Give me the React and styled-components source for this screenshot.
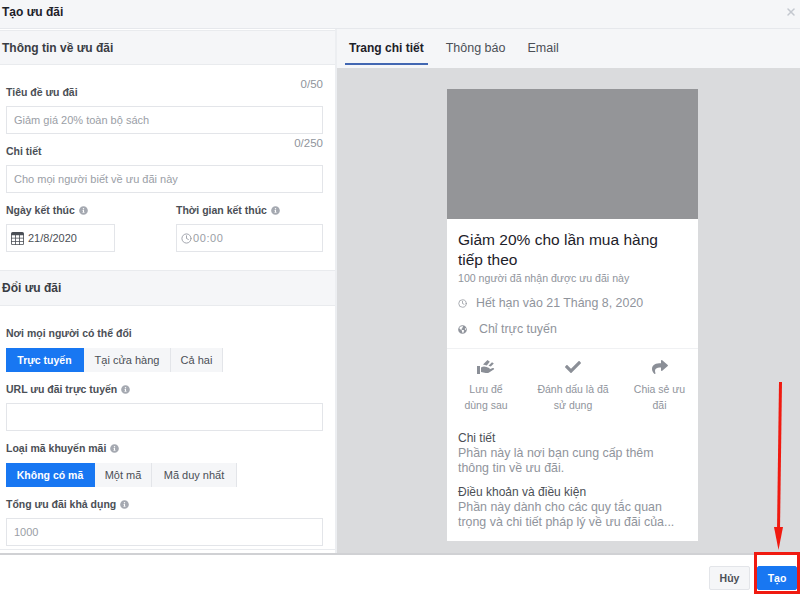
import React from 'react';
import styled, { createGlobalStyle } from 'styled-components';
import { FaCheck, FaShare, FaGlobeAmericas, FaInfoCircle } from 'react-icons/fa';
import { FiClock, FiX } from 'react-icons/fi';
import { BsTable } from 'react-icons/bs';

const GlobalStyle = createGlobalStyle`
  html, body {
    margin: 0;
    padding: 0;
    background: #fff;
    font-family: "Liberation Sans", Arial, sans-serif;
  }
  * { box-sizing: border-box; }
`;

const Page = styled.div`
  position: relative;
  width: 800px;
  height: 600px;
  overflow: hidden;
  display: flex;
  flex-direction: column;
  background: #fff;
`;

const TitleBar = styled.header`
  height: 29px;
  flex: none;
  display: flex;
  align-items: center;
  justify-content: space-between;
  padding: 0 3px 5px 2px;
  background: #f5f6f8;
  border-bottom: 1px solid #e6e8ec;
`;

const Title = styled.h1`
  margin: 0;
  font-size: 12px;
  font-weight: 700;
  color: #1d2129;
`;

const CloseIcon = styled(FiX)`
  width: 12px;
  height: 12px;
  stroke-width: 3;
  color: #c4c8cf;
`;

const Body = styled.div`
  height: 526px;
  flex: none;
  display: flex;
  border-bottom: 2px solid #d0d1d4;
`;

const LeftPanel = styled.div`
  width: 337px;
  flex: none;
  border-right: 2px solid #eceef1;
  padding-top: 1px;
  background: #fff;
`;

const SectionHeader = styled.h2`
  margin: 0;
  height: ${(p) => p.$height}px;
  display: flex;
  align-items: center;
  padding-left: 2px;
  font-size: 12px;
  font-weight: 700;
  color: #3a3d44;
  background: #f5f6f8;
  border-top: 1px solid #e9ebee;
  border-bottom: 1px solid #e9ebee;
`;

const Section = styled.section`
  height: ${(p) => p.$height}px;
  padding: 20px 12px 0 6px;
  border-bottom: ${(p) => (p.$line ? '1px solid #e9ebee' : 'none')};
`;

const FieldHead = styled.div`
  height: 14px;
  display: flex;
  align-items: center;
  justify-content: space-between;
  margin-bottom: 7px;
`;

const Label = styled.label`
  display: flex;
  align-items: center;
  gap: 4px;
  font-size: 10.5px;
  font-weight: 700;
  color: #4b4f56;
  white-space: nowrap;
`;

const InfoIcon = styled(FaInfoCircle)`
  width: 9px;
  height: 9px;
  color: #a5a9b1;
`;

const Counter = styled.span`
  margin-top: -17px;
  font-size: 11.5px;
  color: #90949c;
`;

const TextInput = styled.div`
  height: 28px;
  display: flex;
  align-items: center;
  gap: ${(p) => (p.$gap ? p.$gap : 0)}px;
  padding-left: ${(p) => (p.$pad ? p.$pad : 7)}px;
  border: 1px solid #e3e5e9;
  font-size: 11px;
  color: ${(p) => (p.$filled ? '#4b4f56' : '#9a9ea6')};
  margin-bottom: ${(p) => (p.$last ? 0 : 10)}px;
  background: #fff;
`;

const TimeValue = styled.span`
  letter-spacing: 0.6px;
`;

const DateRow = styled.div`
  display: flex;
  justify-content: space-between;
`;

const DateField = styled.div`
  width: ${(p) => p.$width}px;
`;

const SegmentGroup = styled.div`
  display: flex;
  margin: 8px 0 10px;
  height: 24px;
`;

const SegmentHead = styled(FieldHead)`
  margin-bottom: 0;
`;

const Segment = styled.div`
  height: 24px;
  width: ${(p) => p.$width}px;
  display: flex;
  align-items: center;
  justify-content: center;
  font-size: ${(p) => (p.$active ? 10.5 : 11)}px;
  font-weight: ${(p) => (p.$active ? 700 : 400)};
  color: ${(p) => (p.$active ? '#fff' : '#4b4f56')};
  background: ${(p) => (p.$active ? '#1877f2' : '#f5f6f8')};
  border-right: 1px solid ${(p) => (p.$active ? '#1877f2' : '#e3e5e9')};
`;

const Preview = styled.div`
  flex: 1;
  display: flex;
  flex-direction: column;
  background: #dadbdd;
`;

const Tabs = styled.nav`
  height: 39px;
  flex: none;
  display: flex;
  gap: 14px;
  padding-left: 8px;
  background: #f5f6f8;
`;

const Tab = styled.div`
  height: 36px;
  display: flex;
  align-items: center;
  padding: 4px 4px 0;
  font-size: ${(p) => (p.$active ? 12 : 12.5)}px;
  font-weight: ${(p) => (p.$active ? 700 : 400)};
  color: ${(p) => (p.$active ? '#1d2129' : '#4b4f56')};
  border-bottom: 2px solid ${(p) => (p.$active ? '#4267b2' : 'transparent')};
`;

const Card = styled.article`
  width: 251px;
  height: 452px;
  margin: 21px 0 0 110px;
  background: #fff;
`;

const CardImage = styled.div`
  height: 130px;
  background: #949598;
`;

const CardBody = styled.div`
  padding: 11px 11px 0;
`;

const CardTitle = styled.h3`
  margin: 0 0 2px;
  font-size: 15.5px;
  font-weight: 400;
  line-height: 20px;
  color: #1d2129;
`;

const Claimed = styled.div`
  font-size: 10.6px;
  line-height: 12px;
  color: #90949c;
  margin-bottom: 12px;
`;

const MetaRow = styled.div`
  display: flex;
  align-items: center;
  gap: ${(p) => p.$gap}px;
  height: 14px;
  margin-bottom: 12px;
  font-size: 12.4px;
  color: #90949c;
  white-space: nowrap;
  svg {
    width: 9px;
    height: 9px;
    color: #90949c;
  }
`;

const Actions = styled.div`
  display: grid;
  grid-template-columns: 78px 96px 77px;
  margin-top: 1px;
  padding-top: 8px;
  border-top: 1px solid #f0f1f3;
  height: 81px;
`;

const Action = styled.div`
  display: flex;
  flex-direction: column;
  align-items: center;
  gap: 6px;
  padding-top: 2px;
  text-align: center;
  font-size: 10.5px;
  line-height: 16px;
  color: #90949c;
  white-space: nowrap;
  svg {
    width: 18px;
    height: 16px;
    color: #8b8f97;
  }
`;

const ActionText = styled.span`
  display: block;
`;

const Copy = styled.div`
  padding: 2px 11px 0;
`;

const CopyBlock = styled.div`
  margin-bottom: 9px;
`;

const CopyTitle = styled.div`
  font-size: 12px;
  line-height: 15px;
  color: #4b4f56;
`;

const CopyText = styled.div`
  font-size: 12.4px;
  line-height: 15px;
  color: #90949c;
  white-space: nowrap;
`;

const Footer = styled.footer`
  flex: 1;
  display: flex;
  align-items: center;
  justify-content: flex-end;
  gap: 7px;
  padding: 0 3px 0 0;
  background: #fff;
`;

const Button = styled.button`
  width: ${(p) => p.$width}px;
  height: 24px;
  padding: 0;
  font-family: inherit;
  font-size: 10.5px;
  font-weight: 700;
  border-radius: 2px;
  color: ${(p) => (p.$primary ? '#fff' : '#4b4f56')};
  background: ${(p) => (p.$primary ? '#1877f2' : '#f5f6f8')};
  border: 1px solid ${(p) => (p.$primary ? '#1877f2' : '#e3e5e9')};
`;

const Highlight = styled.div`
  position: absolute;
  left: 754px;
  top: 552px;
  width: 46px;
  height: 42px;
  border: 3px solid #f01a10;
`;

const ArrowDrawing = styled.svg`
  position: absolute;
  left: 770px;
  top: 380px;
`;

// hand with the offer lying on it, the library has no close match
const SaveIcon = () => (
  <svg viewBox="0 0 18 16" fill="currentColor">
    <rect x="0" y="7" width="3" height="8" />
    <path d="M4 8.5c2-1.3 3.6-1.3 5.5-.4l2.7 1c1 .5.5 1.8-.5 1.6l-3-.6 3.4.3 3.6-1.4c1.2-.4 2 .9 1 1.6l-5 3.1c-1 .5-2 .5-3 .2L4 13z" />
    <path d="M6 5.600 10.500 1l2.300 1.700L9.800 6.400z" />
    <path d="M11.500 6.800 15 3.200l1.800 1.400-3 3z" />
  </svg>
);

const App = () => (
  <Page>
    <GlobalStyle />
    <TitleBar>
      <Title>Tạo ưu đãi</Title>
      <CloseIcon />
    </TitleBar>
    <Body>
      <LeftPanel>
        <SectionHeader $height={35}>Thông tin về ưu đãi</SectionHeader>
        <Section $height={205}>
          <FieldHead>
            <Label>Tiêu đề ưu đãi</Label>
            <Counter>0/50</Counter>
          </FieldHead>
          <TextInput>Giảm giá 20% toàn bộ sách</TextInput>
          <FieldHead>
            <Label>Chi tiết</Label>
            <Counter>0/250</Counter>
          </FieldHead>
          <TextInput>Cho mọi người biết về ưu đãi này</TextInput>
          <DateRow>
            <DateField $width={109}>
              <FieldHead>
                <Label>Ngày kết thúc <InfoIcon /></Label>
              </FieldHead>
              <TextInput $filled $pad={4} $gap={4} $last>
                <BsTable size={13} color="#4b4f56" />
                21/8/2020
              </TextInput>
            </DateField>
            <DateField $width={147}>
              <FieldHead>
                <Label>Thời gian kết thúc <InfoIcon /></Label>
              </FieldHead>
              <TextInput $pad={4} $gap={1} $last>
                <FiClock size={11} color="#9a9ea6" />
                <TimeValue>00:00</TimeValue>
              </TextInput>
            </DateField>
          </DateRow>
        </Section>
        <SectionHeader $height={36}>Đổi ưu đãi</SectionHeader>
        <Section $height={244} $line>
          <SegmentHead>
            <Label>Nơi mọi người có thể đổi</Label>
          </SegmentHead>
          <SegmentGroup>
            <Segment $active $width={78}>Trực tuyến</Segment>
            <Segment $width={87}>Tại cửa hàng</Segment>
            <Segment $width={52}>Cả hai</Segment>
          </SegmentGroup>
          <FieldHead>
            <Label>URL ưu đãi trực tuyến <InfoIcon /></Label>
          </FieldHead>
          <TextInput />
          <SegmentHead>
            <Label>Loại mã khuyến mãi <InfoIcon /></Label>
          </SegmentHead>
          <SegmentGroup>
            <Segment $active $width={89}>Không có mã</Segment>
            <Segment $width={57}>Một mã</Segment>
            <Segment $width={85}>Mã duy nhất</Segment>
          </SegmentGroup>
          <FieldHead>
            <Label>Tổng ưu đãi khả dụng <InfoIcon /></Label>
          </FieldHead>
          <TextInput $last>1000</TextInput>
        </Section>
      </LeftPanel>
      <Preview>
        <Tabs>
          <Tab $active>Trang chi tiết</Tab>
          <Tab>Thông báo</Tab>
          <Tab>Email</Tab>
        </Tabs>
        <Card>
          <CardImage />
          <CardBody>
            <CardTitle>Giảm 20% cho lần mua hàng tiếp theo</CardTitle>
            <Claimed>100 người đã nhận được ưu đãi này</Claimed>
            <MetaRow $gap={9}><FiClock />Hết hạn vào 21 Tháng 8, 2020</MetaRow>
            <MetaRow $gap={12}><FaGlobeAmericas />Chỉ trực tuyến</MetaRow>
          </CardBody>
          <Actions>
            <Action><SaveIcon /><ActionText>Lưu để<br />dùng sau</ActionText></Action>
            <Action><FaCheck /><ActionText>Đánh dấu là đã<br />sử dụng</ActionText></Action>
            <Action><FaShare /><ActionText>Chia sẻ ưu<br />đãi</ActionText></Action>
          </Actions>
          <Copy>
            <CopyBlock>
              <CopyTitle>Chi tiết</CopyTitle>
              <CopyText>Phần này là nơi bạn cung cấp thêm<br />thông tin về ưu đãi.</CopyText>
            </CopyBlock>
            <CopyBlock>
              <CopyTitle>Điều khoản và điều kiện</CopyTitle>
              <CopyText>Phần này dành cho các quy tắc quan<br />trọng và chi tiết pháp lý về ưu đãi của...</CopyText>
            </CopyBlock>
          </Copy>
        </Card>
      </Preview>
    </Body>
    <Footer>
      <Button $width={41}>Hủy</Button>
      <Button $primary $width={40}>Tạo</Button>
    </Footer>
    <ArrowDrawing width="20" height="175" viewBox="0 0 20 175">
      <line x1="10.5" y1="2" x2="8.5" y2="150" stroke="#f01a10" strokeWidth="3" />
      <polygon points="4,147 13,147 8.5,170" fill="#f01a10" />
    </ArrowDrawing>
    <Highlight />
  </Page>
);

export default App;
